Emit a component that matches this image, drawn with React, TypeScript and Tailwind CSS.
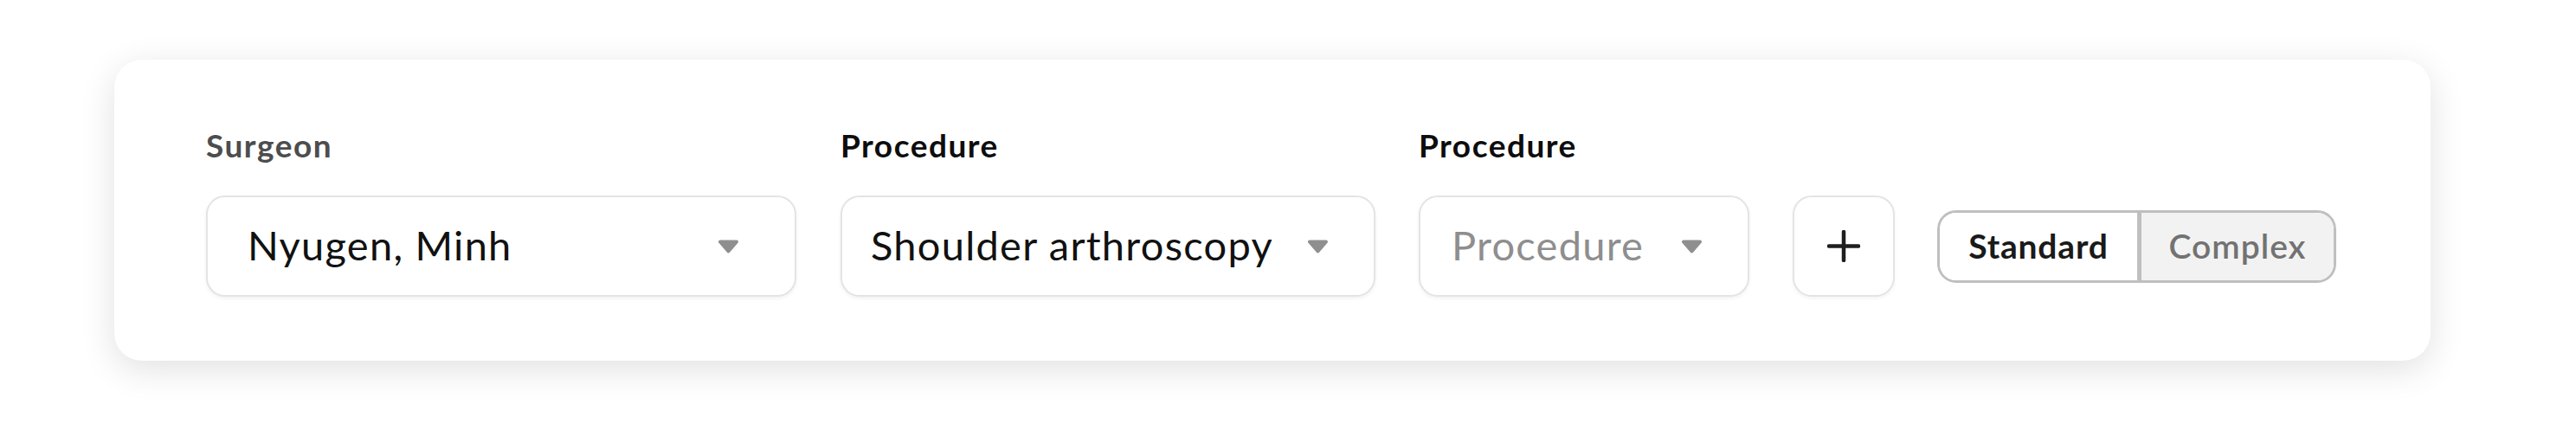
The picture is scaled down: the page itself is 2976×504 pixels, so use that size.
import React from "react";

function Chevron() {
  return (
    <svg width="25" height="16" viewBox="0 0 25 16" className="shrink-0">
      <path
        d="M3 2.5 H22 L12.5 13.5 Z"
        fill="#8f8f8f"
        stroke="#8f8f8f"
        strokeWidth="4"
        strokeLinejoin="round"
      />
    </svg>
  );
}

function PlusIcon() {
  return (
    <svg width="38" height="37" viewBox="0 0 38 37">
      <path
        d="M19 2 V35 M2 18.5 H36"
        stroke="#1f1f1f"
        strokeWidth="4.5"
        strokeLinecap="round"
      />
    </svg>
  );
}

function Field({
  label,
  labelColor,
  value,
  placeholder,
  width,
  pl,
  pr,
}: {
  label: string;
  labelColor: string;
  value?: string;
  placeholder?: string;
  width: string;
  pl: string;
  pr: string;
}) {
  return (
    <div className="flex flex-col">
      <div
        className={`text-[37px] leading-[44px] tracking-[1.5px] font-bold mb-[36px] ${labelColor}`}
      >
        {label}
      </div>
      <div
        className={`${width} ${pl} ${pr} h-[117px] flex items-center justify-between rounded-[22px] border-2 border-[#e4e4e4] bg-white shadow-[0_2px_4px_rgba(0,0,0,0.06)]`}
      >
        <span
          className={`text-[47px] leading-[56px] tracking-[1.25px] pb-[3px] ${
            value ? "text-[#111111]" : "text-[#8e8e8e]"
          }`}
        >
          {value ?? placeholder}
        </span>
        <Chevron />
      </div>
    </div>
  );
}

export default function App() {
  return (
    <div
      className="w-[2976px] h-[504px] bg-white pl-[132px] pt-[69px]"
      style={{ fontFamily: "Lato, 'Noto Sans', sans-serif" }}
    >
      <div className="w-[2676px] h-[348px] rounded-[32px] bg-white shadow-[0_10px_40px_rgba(0,0,0,0.12)] pl-[106px] pt-[77px]">
        <div className="flex items-end">
          <Field
            label="Surgeon"
            labelColor="text-[#4d4d4d]"
            value="Nyugen, Minh"
            width="w-[682px]"
            pl="pl-[46px]"
            pr="pr-[64px]"
          />
          <div className="w-[51px]" />
          <Field
            label="Procedure"
            labelColor="text-[#0d0d0d]"
            value="Shoulder arthroscopy"
            width="w-[618px]"
            pl="pl-[33px]"
            pr="pr-[52px]"
          />
          <div className="w-[50px]" />
          <Field
            label="Procedure"
            labelColor="text-[#0d0d0d]"
            placeholder="Procedure"
            width="w-[382px]"
            pl="pl-[36px]"
            pr="pr-[52px]"
          />
          <div className="w-[50px]" />
          <button className="w-[118px] h-[117px] flex items-center justify-center rounded-[22px] border-2 border-[#e4e4e4] bg-white shadow-[0_2px_4px_rgba(0,0,0,0.05)]">
            <PlusIcon />
          </button>
          <div className="w-[49px]" />
          <div className="h-[117px] flex items-center">
            <div className="flex h-[84px] rounded-[22px] border-[3px] border-[#bfbfbf] overflow-hidden">
              <div className="w-[228px] flex items-center justify-center bg-white text-[39px] tracking-[0.8px] font-bold text-[#1a1a1a]">
                Standard
              </div>
              <div className="w-[227px] flex items-center justify-center bg-[#f2f2f2] border-l-[5px] border-[#bfbfbf] text-[39px] tracking-[1px] font-semibold text-[#727272]">
                Complex
              </div>
            </div>
          </div>
        </div>
      </div>
    </div>
  );
}
